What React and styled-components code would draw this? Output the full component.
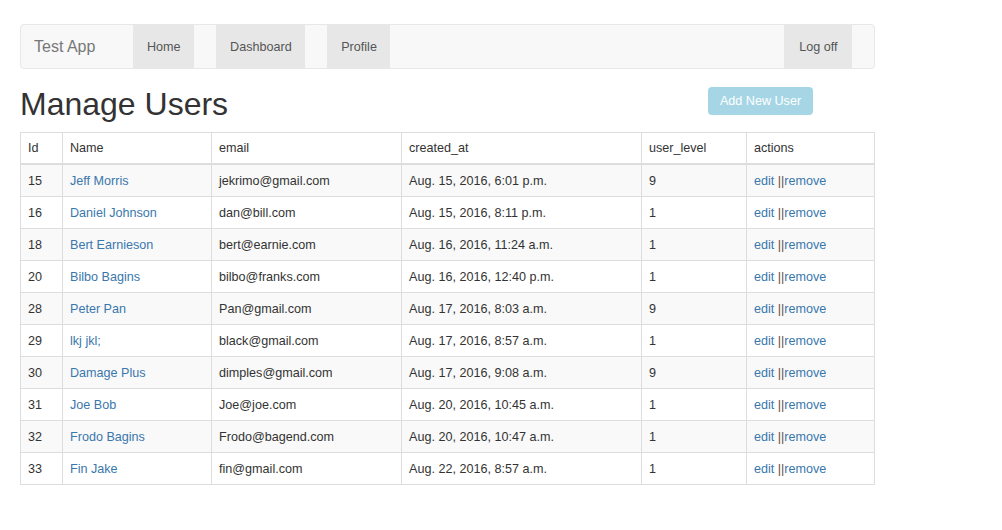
import React from "react";
import styled, { createGlobalStyle } from "styled-components";

const GlobalStyle = createGlobalStyle`
  body {
    margin: 0;
    background: #fff;
    font-family: "Liberation Sans", Arial, sans-serif;
    font-size: 12.6px;
    color: #333;
  }
`;

const Page = styled.div`
  width: 855px;
  padding: 24px 0 0 20px;
`;

const Navbar = styled.nav`
  display: flex;
  height: 43px;
  background: #f8f8f8;
  border: 1px solid #e7e7e7;
  border-radius: 4px;
`;

const Brand = styled.span`
  width: 99px;
  padding-left: 13px;
  display: flex;
  align-items: center;
  font-size: 16px;
  color: #777;
`;

const NavItem = styled.a`
  display: flex;
  align-items: center;
  padding: ${(p) => (p.right ? "0 14px 0 15px" : "0 13px 0 14px")};
  margin-right: 22.5px;
  margin-left: ${(p) => (p.right ? "auto" : "0")};
  background: #e7e7e7;
  color: #555;
  font-size: 12.6px;
  text-decoration: none;
`;

const HeadRow = styled.div`
  display: flex;
  align-items: flex-start;
  height: 63px;
`;

const Title = styled.h1`
  margin: 0;
  padding-top: 17px;
  width: 688px;
  font-size: 32px;
  font-weight: 500;
  line-height: 36px;
  color: #333;
`;

const AddButton = styled.button`
  margin-top: 18px;
  height: 28px;
  width: 105px;
  border: none;
  border-radius: 4px;
  background: #a6d6e5;
  color: #fff;
  font-family: "Liberation Sans", Arial, sans-serif;
  font-size: 12.6px;
  padding: 0;
`;

const Table = styled.table`
  width: 855px;
  table-layout: fixed;
  border-collapse: collapse;
  border: 1px solid #ddd;
`;

const Th = styled.th`
  height: 30px;
  padding: 0 7px;
  border: 1px solid #ddd;
  border-bottom-width: 2px;
  text-align: left;
  font-weight: normal;
  white-space: nowrap;
  width: ${(p) => (p.w ? `${p.w}px` : "auto")};
`;

const Tr = styled.tr`
  background: ${(p) => (p.striped ? "#f9f9f9" : "#fff")};
`;

const Td = styled.td`
  height: 31px;
  padding: 0 7px;
  border: 1px solid #ddd;
  white-space: nowrap;
`;

const Link = styled.a`
  color: #3a77ad;
  text-decoration: none;
`;

const Sep = styled.span`
  color: #6b4a3e;
`;

const users = [
  [15, "Jeff Morris", "jekrimo@gmail.com", "Aug. 15, 2016, 6:01 p.m.", 9],
  [16, "Daniel Johnson", "dan@bill.com", "Aug. 15, 2016, 8:11 p.m.", 1],
  [18, "Bert Earnieson", "bert@earnie.com", "Aug. 16, 2016, 11:24 a.m.", 1],
  [20, "Bilbo Bagins", "bilbo@franks.com", "Aug. 16, 2016, 12:40 p.m.", 1],
  [28, "Peter Pan", "Pan@gmail.com", "Aug. 17, 2016, 8:03 a.m.", 9],
  [29, "lkj jkl;", "black@gmail.com", "Aug. 17, 2016, 8:57 a.m.", 1],
  [30, "Damage Plus", "dimples@gmail.com", "Aug. 17, 2016, 9:08 a.m.", 9],
  [31, "Joe Bob", "Joe@joe.com", "Aug. 20, 2016, 10:45 a.m.", 1],
  [32, "Frodo Bagins", "Frodo@bagend.com", "Aug. 20, 2016, 10:47 a.m.", 1],
  [33, "Fin Jake", "fin@gmail.com", "Aug. 22, 2016, 8:57 a.m.", 1],
];

export default function App() {
  return (
    <Page>
      <GlobalStyle />
      <Navbar>
        <Brand>Test App</Brand>
        <NavItem href="#">Home</NavItem>
        <NavItem href="#">Dashboard</NavItem>
        <NavItem href="#">Profile</NavItem>
        <NavItem href="#" right>
          Log off
        </NavItem>
      </Navbar>
      <HeadRow>
        <Title>Manage Users</Title>
        <AddButton>Add New User</AddButton>
      </HeadRow>
      <Table>
        <thead>
          <tr>
            <Th w={27}>Id</Th>
            <Th w={134}>Name</Th>
            <Th w={175}>email</Th>
            <Th w={225}>created_at</Th>
            <Th w={90}>user_level</Th>
            <Th>actions</Th>
          </tr>
        </thead>
        <tbody>
          {users.map(([id, name, email, created, level], i) => (
            <Tr key={id} striped={i % 2 === 0}>
              <Td>{id}</Td>
              <Td>
                <Link href="#">{name}</Link>
              </Td>
              <Td>{email}</Td>
              <Td>{created}</Td>
              <Td>{level}</Td>
              <Td>
                <Link href="#">edit</Link> <Sep>||</Sep>
                <Link href="#">remove</Link>
              </Td>
            </Tr>
          ))}
        </tbody>
      </Table>
    </Page>
  );
}
